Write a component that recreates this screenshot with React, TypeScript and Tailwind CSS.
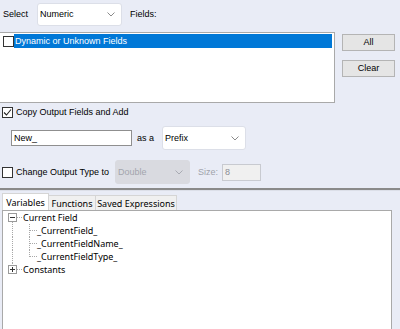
import React from "react";

function Chevron({ color = "#8a8a8a" }: { color?: string }) {
  return (
    <svg width="8" height="5" viewBox="0 0 8 5" className="shrink-0">
      <path d="M0.5 0.5 L4 4 L7.5 0.5" fill="none" stroke={color} strokeWidth="1" />
    </svg>
  );
}

function Dropdown({ label, className, disabled }: { label: string; className: string; disabled?: boolean }) {
  return (
    <div
      className={
        "flex items-center justify-between rounded-[3px] pl-[2px] pr-[6px] " +
        (disabled
          ? "bg-[#d9dae0] text-[#a3a5ad] border border-[#d9dae0] "
          : "bg-white text-black border border-[#dcdfe8] ") +
        className
      }
    >
      <span>{label}</span>
      <Chevron color={disabled ? "#a9abb3" : "#8a8a8a"} />
    </div>
  );
}

function Check({ checked }: { checked?: boolean }) {
  return (
    <div className="w-[11px] h-[11px] shrink-0 border border-[#333333] bg-white flex items-center justify-center">
      {checked && (
        <svg width="9" height="9" viewBox="0 0 9 9">
          <path d="M1 4.5 L3.5 7 L8 1.5" fill="none" stroke="#222" strokeWidth="1.1" />
        </svg>
      )}
    </div>
  );
}

function Button({ label, className }: { label: string; className?: string }) {
  return (
    <div
      className={
        "h-[17px] w-[53px] flex items-center justify-center bg-[#e5e5e5] border border-[#b4b4b4] text-black " +
        (className || "")
      }
    >
      {label}
    </div>
  );
}

function ExpandBox({ minus }: { minus?: boolean }) {
  return (
    <>
      <rect x="5.5" y="2.5" width="8" height="8" fill="white" stroke="#9a9a9a" />
      <line x1="7" y1="6.5" x2="12" y2="6.5" stroke="#333" />
      {!minus && <line x1="9.5" y1="4" x2="9.5" y2="9" stroke="#333" />}
    </>
  );
}

function TreeRow({ kind, label }: { kind: "root" | "child" | "lastchild" | "rootlast"; label: string }) {
  if (kind === "root" || kind === "rootlast") {
    return (
      <div className="flex items-center h-[13px]">
        <svg width="20" height="13" viewBox="0 0 20 13" className="shrink-0">
          {kind === "root" && (
            <line x1="9.5" y1="11" x2="9.5" y2="13" stroke="#a8a8a8" strokeDasharray="1 1" />
          )}
          {kind === "rootlast" && (
            <line x1="9.5" y1="0" x2="9.5" y2="2" stroke="#a8a8a8" strokeDasharray="1 1" />
          )}
          <line x1="14" y1="6.5" x2="19" y2="6.5" stroke="#a8a8a8" strokeDasharray="1 1" />
          <ExpandBox minus={kind === "root"} />
        </svg>
        <span>{label}</span>
      </div>
    );
  }
  return (
    <div className="flex items-center h-[13px]">
      <svg width="34" height="13" viewBox="0 0 34 13" className="shrink-0">
        <line x1="9.5" y1="0" x2="9.5" y2="13" stroke="#a8a8a8" strokeDasharray="1 1" />
        <line
          x1="26.5"
          y1="0"
          x2="26.5"
          y2={kind === "lastchild" ? 7 : 13}
          stroke="#a8a8a8"
          strokeDasharray="1 1"
        />
        <line x1="27" y1="6.5" x2="34" y2="6.5" stroke="#a8a8a8" strokeDasharray="1 1" />
      </svg>
      <span>{label}</span>
    </div>
  );
}

export default function App() {
  return (
    <div className="w-[400px] h-[329px] overflow-hidden bg-[#e9ecf6] font-['Liberation_Sans',Arial,sans-serif] text-[9px] leading-none text-black flex flex-col">
      {/* Row 1 */}
      <div className="flex items-center h-[23px] mt-[3px]">
        <span className="ml-[3px] w-[34px]">Select</span>
        <Dropdown label="Numeric" className="w-[85px] h-[23px]" />
        <span className="ml-[8px]">Fields:</span>
      </div>

      {/* Row 2: list + buttons */}
      <div className="flex mt-[6px] h-[71px]">
        <div className="w-[335px] h-[71px] bg-white border-t border-r border-b border-[#a9a9a9] pt-[1px]">
          <div className="flex items-center h-[14px] ml-[3px] mr-[2px]">
            <Check />
            <div className="flex-1 h-[14px] bg-[#0078d7] text-white flex items-center pl-[1px]">
              Dynamic or Unknown Fields
            </div>
          </div>
        </div>
        <div className="ml-[7px] pt-[2px] flex flex-col">
          <Button label="All" />
          <Button label="Clear" className="mt-[9px]" />
        </div>
      </div>

      {/* Copy output */}
      <div className="flex items-center h-[11px] mt-[4px]">
        <div className="ml-[2px]">
          <Check checked />
        </div>
        <span className="ml-[3px]">Copy Output Fields and Add</span>
      </div>

      {/* New_ row */}
      <div className="flex items-center h-[24px] mt-[8px]">
        <div className="ml-[11px] w-[121px] h-[16px] bg-white border border-[#8f8f8f] flex items-center pl-[2px]">
          New_
        </div>
        <span className="ml-[5px] w-[25px]">as a</span>
        <Dropdown label="Prefix" className="w-[84px] h-[24px]" />
      </div>

      {/* Change output type */}
      <div className="flex items-center h-[24px] mt-[10px]">
        <div className="ml-[2px]">
          <Check />
        </div>
        <span className="ml-[3px] w-[99px]">Change Output Type to</span>
        <Dropdown label="Double" disabled className="w-[75px] h-[24px]" />
        <span className="ml-[8px] w-[24px] text-[#a0a3ab]">Size:</span>
        <div className="w-[39px] h-[17px] bg-[#f0f0f0] border border-[#c8cad0] text-[#8a8c94] flex items-center pl-[2px]">
          8
        </div>
      </div>

      {/* Separator */}
      <div className="mt-[4px] h-[2px] bg-[#8a8a8a]" />
      <div className="h-[1px] bg-[#dcdfe8]" />

      {/* Tabs */}
      <div className="mt-[2px] ml-[2px] flex items-end h-[17px] font-['Noto_Sans','Open_Sans',sans-serif] text-[9px]">
        <div className="w-[47px] h-[17px] bg-white border border-b-0 border-[#d5d5d5] flex items-center justify-center">
          Variables
        </div>
        <div className="w-[47px] h-[15px] bg-[#f0f0f0] border border-b-0 border-l-0 border-[#d5d5d5] flex items-center justify-center">
          Functions
        </div>
        <div className="w-[81px] h-[15px] bg-[#f0f0f0] border border-b-0 border-l-0 border-[#d5d5d5] flex items-center justify-center">
          Saved Expressions
        </div>
      </div>

      {/* Tree panel */}
      <div className="ml-[2px] w-[390px] flex-1 bg-white border border-b-0 border-[#a9a9a9] font-['Noto_Sans','Open_Sans',sans-serif] text-[9px]">
        <TreeRow kind="root" label="Current Field" />
        <TreeRow kind="child" label="_CurrentField_" />
        <TreeRow kind="child" label="_CurrentFieldName_" />
        <TreeRow kind="lastchild" label="_CurrentFieldType_" />
        <TreeRow kind="rootlast" label="Constants" />
      </div>
    </div>
  );
}
